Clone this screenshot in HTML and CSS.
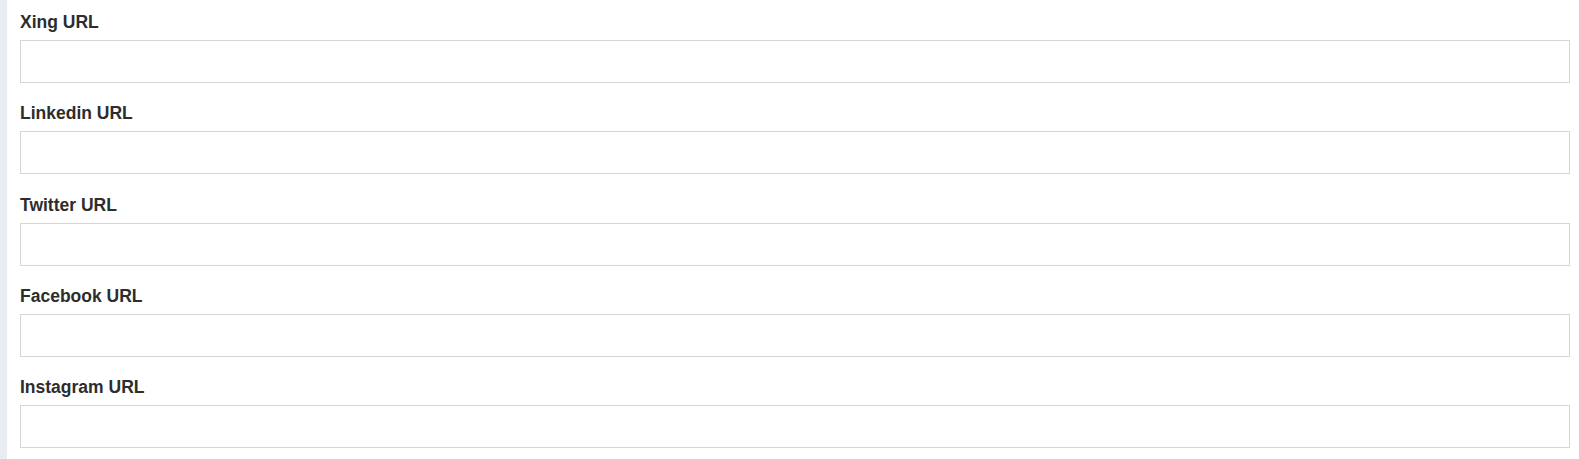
FILE: index.html
```html
<!DOCTYPE html>
<html>
<head>
<meta charset="utf-8">
<link rel="stylesheet" href="styles.css">
</head>
<body>
<div class="page">
  <div class="sidebar-edge"></div>
  <form class="form">
    <div class="group">
      <label class="label">Xing URL</label>
      <input class="input" type="text">
    </div>
    <div class="group">
      <label class="label">Linkedin URL</label>
      <input class="input" type="text">
    </div>
    <div class="group">
      <label class="label">Twitter URL</label>
      <input class="input" type="text">
    </div>
    <div class="group">
      <label class="label">Facebook URL</label>
      <input class="input" type="text">
    </div>
    <div class="group">
      <label class="label">Instagram URL</label>
      <input class="input" type="text">
    </div>
  </form>
</div>
</body>
</html>
```
FILE: styles.css
```css
html, body {
  margin: 0;
  padding: 0;
  background: #ffffff;
  height: 100%;
}
.page {
  display: flex;
  min-height: 459px;
  font-family: "Liberation Sans", Arial, sans-serif;
}
.sidebar-edge {
  width: 7px;
  flex: 0 0 7px;
  background: #e9ecf2;
}
.form {
  flex: 1;
  padding: 10px 9px 0 13px;
  margin: 0;
}
.group {
  margin-bottom: 18.25px;
}
.label {
  display: block;
  font-size: 17.5px;
  font-weight: bold;
  line-height: 24px;
  color: #2d2d2d;
  margin-bottom: 6px;
}
.input {
  display: block;
  box-sizing: border-box;
  width: 100%;
  height: 43px;
  margin: 0;
  border: 1px solid #d3d6dc;
  border-radius: 0;
  background: #fff;
  outline: none;
  padding: 6px 12px;
}
```
